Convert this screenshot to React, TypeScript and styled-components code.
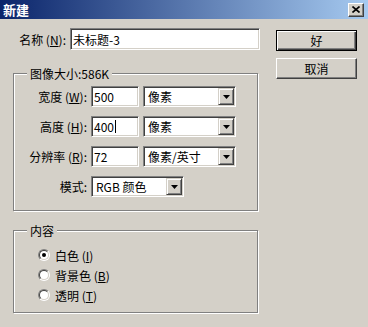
import styled, { createGlobalStyle } from "styled-components";

const GlobalStyle = createGlobalStyle`
  html, body {
    margin: 0;
    padding: 0;
    background: #d4d0c8;
  }
  body {
    font-family: "Noto Sans CJK SC", "Noto Sans", sans-serif;
    font-size: 12px;
    color: #000;
  }
`;

const Window = styled.div`
  width: 368px;
  height: 327px;
  background: #d4d0c8;
  overflow: hidden;
`;

const TitleBar = styled.div`
  height: 19px;
  display: flex;
  align-items: center;
  justify-content: space-between;
  padding: 0 4px 0 3px;
  background: linear-gradient(to right, #0a246a, #a6caf0);
`;

const Title = styled.span`
  color: #fff;
  font-weight: bold;
  font-size: 13px;
  line-height: 19px;
`;

const CloseButton = styled.div`
  width: 16px;
  height: 14px;
  box-sizing: border-box;
  display: flex;
  align-items: center;
  justify-content: center;
  background: #d4d0c8;
  border: 1px solid;
  border-color: #fff #404040 #404040 #fff;
  box-shadow: inset -1px -1px 0 #808080;
`;

const Body = styled.div`
  display: flex;
  padding: 9px 0 0 13px;
`;

const LeftColumn = styled.div`
  display: flex;
  flex-direction: column;
  width: 247px;
`;

const RightColumn = styled.div`
  display: flex;
  flex-direction: column;
  gap: 7px;
  margin-left: 16px;
  padding-top: 2px;
`;

const Button = styled.div<{ $default?: boolean }>`
  width: 81px;
  height: 21px;
  box-sizing: border-box;
  display: flex;
  align-items: center;
  justify-content: center;
  background: #d4d0c8;
  border: 1px solid ${(p) => (p.$default ? "#000" : "transparent")};
  box-shadow: ${(p) =>
    p.$default
      ? "inset 1px 1px 0 #fff, inset -1px -1px 0 #404040, inset -2px -2px 0 #808080"
      : "inset 0 0 0 0 transparent"};
  ${(p) =>
    !p.$default &&
    `
    border-color: #fff #404040 #404040 #fff;
    box-shadow: inset -1px -1px 0 #808080;
  `}
`;

const NameRow = styled.div`
  display: flex;
  align-items: center;
  gap: 4px;
  height: 22px;
`;

const NameLabel = styled.span`
  width: 53px;
  text-align: right;
  white-space: nowrap;
`;

const Field = styled.div<{ $width: number; $height?: number }>`
  width: ${(p) => p.$width}px;
  height: ${(p) => p.$height ?? 21}px;
  box-sizing: border-box;
  display: flex;
  align-items: center;
  padding-left: 1px;
  background: #fff;
  border: 1px solid;
  border-color: #808080 #fff #fff #808080;
  box-shadow: inset 1px 1px 0 #404040, inset -1px -1px 0 #d4d0c8;
  padding: 0 2px;
  white-space: nowrap;
  overflow: hidden;
`;

const Caret = styled.span`
  display: inline-block;
  width: 1px;
  height: 13px;
  background: #000;
  margin-left: 1px;
`;

const Group = styled.fieldset<{ $top: number }>`
  box-sizing: border-box;
  width: 245px;
  margin: ${(p) => p.$top}px 0 0 0;
  padding: 0;
  border: 1px solid #808080;
  box-shadow: inset 1px 1px 0 #fff, 1px 1px 0 #fff;
  min-inline-size: 0;
`;

const Legend = styled.legend`
  margin-left: 13px;
  padding: 0 3px;
  line-height: 15px;
  height: 15px;
  background: #d4d0c8;
`;

const SizeGrid = styled.div`
  display: grid;
  grid-template-columns: 73px 48px 93px;
  grid-auto-rows: 21px;
  column-gap: 4px;
  row-gap: 9px;
  padding: 5px 0 13px 0;
  align-items: center;
`;

const RowLabel = styled.span`
  text-align: right;
  white-space: nowrap;
`;

const ModeCell = styled.div`
  grid-column: span 2;
`;

const Select = styled.div<{ $width: number }>`
  width: ${(p) => p.$width}px;
  height: 21px;
  box-sizing: border-box;
  display: flex;
  align-items: center;
  background: #fff;
  border: 1px solid;
  border-color: #808080 #fff #fff #808080;
  box-shadow: inset 1px 1px 0 #404040, inset -1px -1px 0 #d4d0c8;
  padding: 2px 1px 2px 1px;
`;

const SelectText = styled.span`
  flex: 1;
  padding-left: 3px;
  white-space: nowrap;
  overflow: hidden;
`;

const ArrowButton = styled.div`
  width: 16px;
  height: 17px;
  box-sizing: border-box;
  display: flex;
  align-items: center;
  justify-content: center;
  background: #d4d0c8;
  border: 1px solid;
  border-color: #d4d0c8 #404040 #404040 #d4d0c8;
  box-shadow: inset 1px 1px 0 #fff, inset -1px -1px 0 #808080;
`;

const RadioList = styled.div`
  display: flex;
  flex-direction: column;
  padding: 7px 0 7px 24px;
`;

const RadioRow = styled.label`
  display: flex;
  align-items: center;
  gap: 5px;
  height: 20px;
`;

const RadioOuter = styled.span`
  width: 12px;
  height: 12px;
  box-sizing: border-box;
  border-radius: 50%;
  border: 1px solid;
  border-color: #808080 #fff #fff #808080;
  display: flex;
`;

const RadioInner = styled.span`
  flex: 1;
  border-radius: 50%;
  border: 1px solid;
  border-color: #404040 #d4d0c8 #d4d0c8 #404040;
  background: #fff;
  display: flex;
  align-items: center;
  justify-content: center;
`;

const RadioDot = styled.span`
  width: 4px;
  height: 4px;
  border-radius: 50%;
  background: #000;
`;

const Arrow = () => (
  <svg width="7" height="4" viewBox="0 0 7 4">
    <polygon points="0,0 7,0 3.5,4" fill="#000" />
  </svg>
);

const DropDown = ({ value, width }: { value: string; width: number }) => (
  <Select $width={width}>
    <SelectText>{value}</SelectText>
    <ArrowButton>
      <Arrow />
    </ArrowButton>
  </Select>
);

const Radio = ({ checked, children }: { checked?: boolean; children: React.ReactNode }) => (
  <RadioRow>
    <RadioOuter>
      <RadioInner>{checked && <RadioDot />}</RadioInner>
    </RadioOuter>
    <span>{children}</span>
  </RadioRow>
);

export default function App() {
  return (
    <>
      <GlobalStyle />
      <Window>
        <TitleBar>
          <Title>新建</Title>
          <CloseButton>
            <svg width="8" height="7" viewBox="0 0 8 7">
              <path d="M0.5 0.5 L7.5 6.5 M7.5 0.5 L0.5 6.5" stroke="#000" strokeWidth="1.6" />
            </svg>
          </CloseButton>
        </TitleBar>
        <Body>
          <LeftColumn>
            <NameRow>
              <NameLabel>
                名称 (<u>N</u>):
              </NameLabel>
              <Field $width={190} $height={22}>未标题-3</Field>
            </NameRow>

            <Group $top={16}>
              <Legend>图像大小:586K</Legend>
              <SizeGrid>
                <RowLabel>
                  宽度 (<u>W</u>):
                </RowLabel>
                <Field $width={48}>500</Field>
                <DropDown value="像素" width={93} />

                <RowLabel>
                  高度 (<u>H</u>):
                </RowLabel>
                <Field $width={48}>
                  400
                  <Caret />
                </Field>
                <DropDown value="像素" width={93} />

                <RowLabel>
                  分辨率 (<u>R</u>):
                </RowLabel>
                <Field $width={48}>72</Field>
                <DropDown value="像素/英寸" width={93} />

                <RowLabel>模式:</RowLabel>
                <ModeCell>
                  <DropDown value="RGB 颜色" width={93} />
                </ModeCell>
              </SizeGrid>
            </Group>

            <Group $top={12}>
              <Legend>内容</Legend>
              <RadioList>
                <Radio checked>
                  白色 (<u>I</u>)
                </Radio>
                <Radio>
                  背景色 (<u>B</u>)
                </Radio>
                <Radio>
                  透明 (<u>T</u>)
                </Radio>
              </RadioList>
            </Group>
          </LeftColumn>

          <RightColumn>
            <Button $default>好</Button>
            <Button>取消</Button>
          </RightColumn>
        </Body>
      </Window>
    </>
  );
}
